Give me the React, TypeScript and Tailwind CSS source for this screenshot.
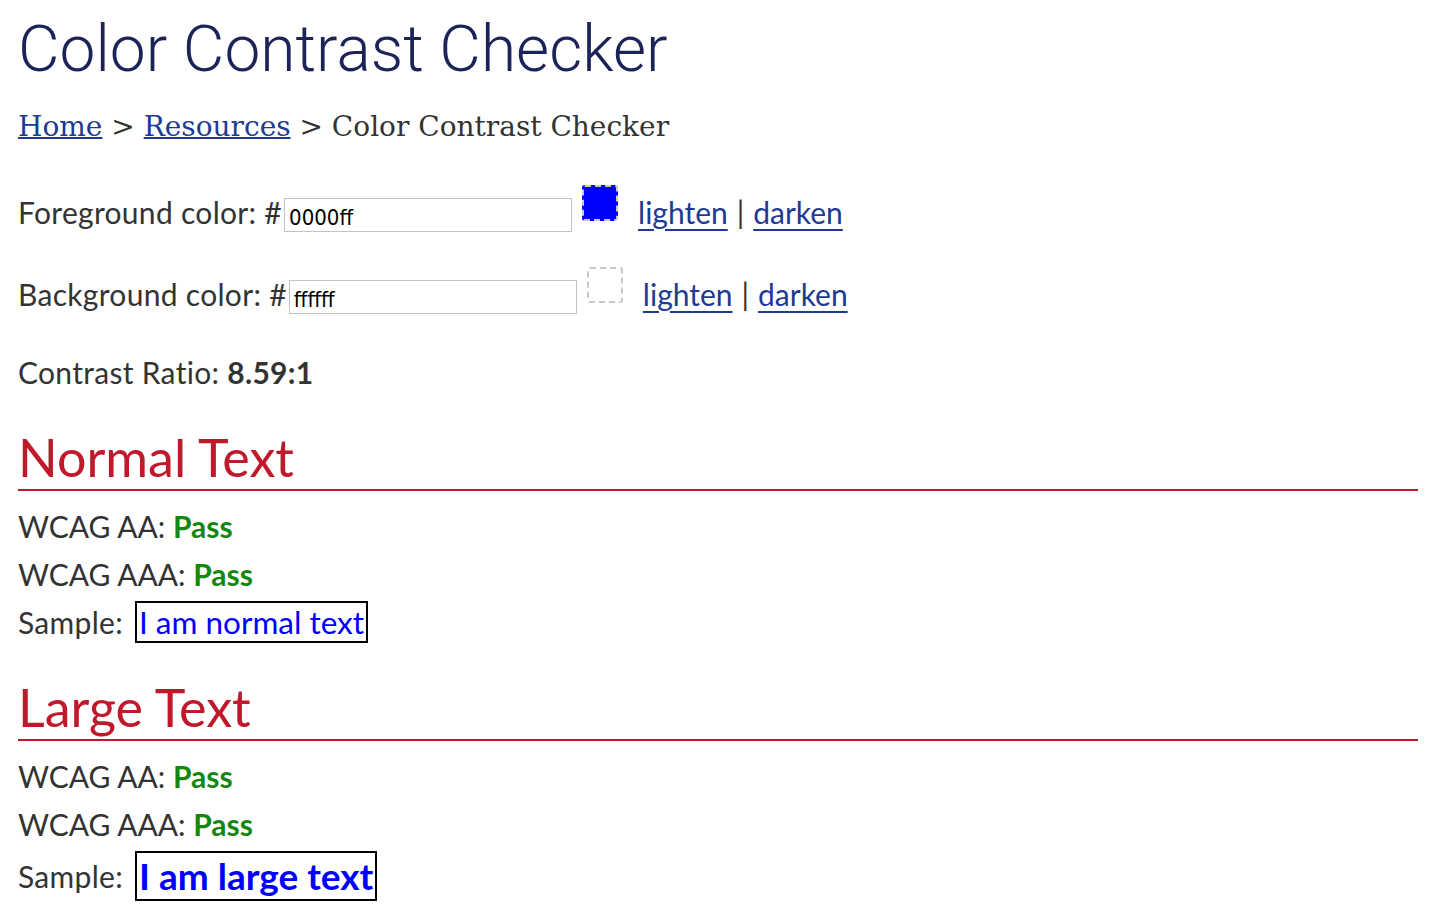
import React from "react";

function ColorRow({ label, value, swatch }: { label: string; value: string; swatch: string }) {
  return (
    <div className="flex items-center h-[48px]">
      <span className="tracking-[0.3px]">{label}: #</span>
      <input
        readOnly
        value={value}
        className="ml-[2px] mt-[6px] w-[288px] h-[34px] border border-[#c3c3c3] px-[4px] pt-[4px] text-[22px] text-black font-['DejaVu_Sans_Condensed','DejaVu_Sans',sans-serif] outline-none"
      />
      <span className={`ml-[10px] -mt-[18px] w-[36px] h-[36px] border-2 border-dashed border-[#c8c8c8] rounded-[3px] ${swatch}`} />
      <a href="#" className="ml-[20px] text-[#1f3a93] underline decoration-[2px] underline-offset-[5px]">lighten</a>
      <span className="mx-[9px]">|</span>
      <a href="#" className="text-[#1f3a93] underline decoration-[2px] underline-offset-[5px]">darken</a>
    </div>
  );
}

function Results({ title, sample, big }: { title: string; sample: string; big?: boolean }) {
  return (
    <section>
      <h2 className="text-[52px] leading-[62px] text-[#c0192c] border-b-2 border-[#c0192c] pb-[1px] mb-[11px]">{title}</h2>
      <div className="leading-[48px]">
        WCAG AA: <b className="text-[#13870f]">Pass</b>
      </div>
      <div className="leading-[48px]">
        WCAG AAA: <b className="text-[#13870f]">Pass</b>
      </div>
      <div className={`flex items-center ${big ? "h-[56px]" : "h-[48px]"}`}>
        <span className="tracking-[0.3px]">Sample:&nbsp;</span>
        <span
          className={`ml-[4px] border-2 border-black text-[#0000ff] px-[2px] ${big ? "font-bold text-[37px] leading-[46px]" : "text-[31.5px] leading-[38px]"}`}
        >
          {sample}
        </span>
      </div>
    </section>
  );
}

export default function App() {
  return (
    <div className="bg-white min-h-screen px-[18px] pr-[26px] text-[#333] text-[30px] font-['Lato',sans-serif]">
      <h1 className="pt-[10px] text-[64px] leading-[80px] text-[#1c2359] font-['Roboto',sans-serif] font-light">
        Color Contrast Checker
      </h1>
      <div className="mt-[16px] text-[28px] font-['DejaVu_Serif',serif] text-[#333]">
        <a href="#" className="text-[#1f3a93] underline decoration-[2px]">Home</a>
        <span> &gt; </span>
        <a href="#" className="text-[#1f3a93] underline decoration-[2px]">Resources</a>
        <span> &gt; Color Contrast Checker</span>
      </div>
      <div className="mt-[40px]">
        <ColorRow label="Foreground color" value="0000ff" swatch="bg-[#0000ff]" />
        <div className="h-[34px]" />
        <ColorRow label="Background color" value="ffffff" swatch="bg-white" />
      </div>
      <div className="mt-[30px] leading-[48px] tracking-[0.3px]">
        Contrast Ratio: <b>8.59:1</b>
      </div>
      <div className="mt-[30px]">
        <Results title="Normal Text" sample="I am normal text" />
      </div>
      <div className="mt-[30px]">
        <Results title="Large Text" sample="I am large text" big />
      </div>
    </div>
  );
}
